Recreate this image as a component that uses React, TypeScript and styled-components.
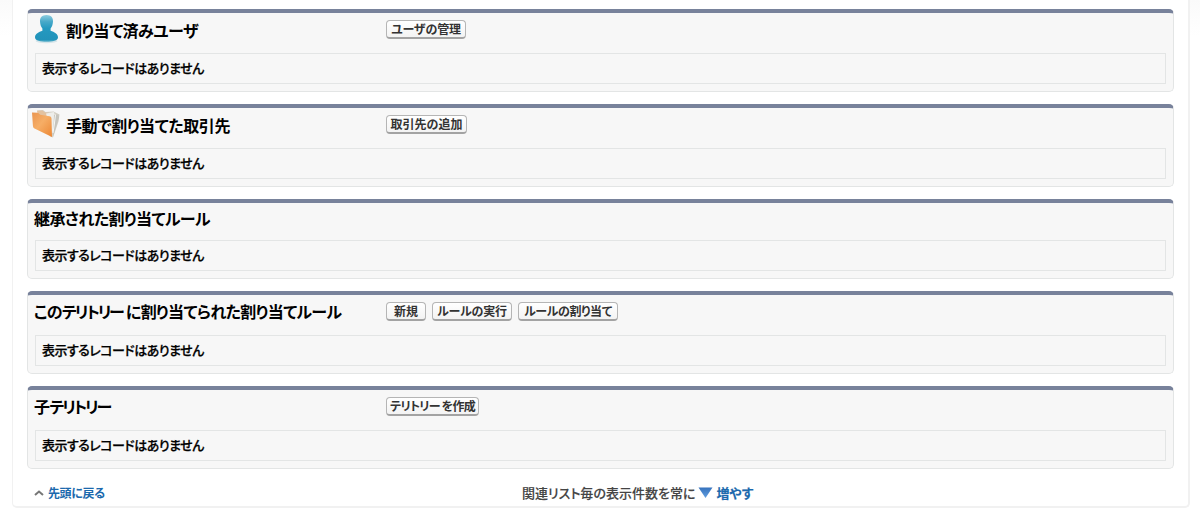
import { Fragment, type ReactNode } from "react";
import styled, { createGlobalStyle } from "styled-components";

const GlobalStyle = createGlobalStyle`
  * {
    box-sizing: border-box;
  }
  body {
    margin: 0;
    background-color: #fff;
    font-family: "Noto Sans CJK JP", sans-serif;
    font-feature-settings: "palt";
    color: #111;
  }
`;

const Page = styled.div`
  height: 514px;
  padding: 0 10px 6px 12px;
  background: linear-gradient(#fafafa, #fff 36px);
  overflow: hidden;
`;

const Content = styled.main`
  height: 508px;
  padding: 9px 15px 0 14px;
  background-color: #fff;
  border: 2px solid #f1f1f1;
  border-top: none;
  border-left-width: 1px;
  border-radius: 0 0 5px 5px;
`;

const RelatedLists = styled.div`
  display: flex;
  flex-direction: column;
  gap: 12px;
  width: 1147px;
`;

const Card = styled.section<{ $compact?: boolean }>`
  display: flex;
  flex-direction: column;
  height: ${({ $compact }) => ($compact ? "80px" : "83px")};
  padding: 0 7px 7px;
  background-color: #f7f7f7;
  border: 1px solid #e3e5e5;
  border-top: 4px solid #78829b;
  border-radius: 5px;
`;

const CardHeader = styled.div`
  display: flex;
  flex: 1;
  align-items: flex-start;
`;

const TitleCell = styled.div<{ $height: number }>`
  display: flex;
  align-items: center;
  width: 351px;
  height: ${({ $height }) => $height}px;
`;

const IconSlot = styled.span`
  display: flex;
  width: 32px;
  margin-left: -4px;
  margin-right: 4px;
`;

const Title = styled.h3<{ $spacing: number }>`
  margin: 0 0 0 -1px;
  color: #000;
  font-size: 16px;
  font-weight: 700;
  line-height: 20px;
  letter-spacing: ${({ $spacing }) => $spacing}px;
  white-space: nowrap;
`;

// katakana set tighter than the rest of the title
const Tight = styled.span`
  letter-spacing: -2.1px;
`;

const Actions = styled.div`
  display: flex;
  gap: 6px;
  padding-top: 7px;
`;

const ActionButton = styled.button<{ $width: number; $spacing?: number }>`
  width: ${({ $width }) => $width}px;
  height: 19px;
  padding: 0 0 1px;
  color: #333;
  background: linear-gradient(#fff, #f3f3f3);
  border: 1px solid #b5b5b5;
  border-bottom: 2px solid #a3a3a3;
  border-radius: 4px;
  font-family: inherit;
  font-feature-settings: inherit;
  font-size: 12px;
  font-weight: 700;
  line-height: 15px;
  letter-spacing: ${({ $spacing = 0 }) => $spacing}px;
  white-space: nowrap;
`;

const EmptyRow = styled.div`
  height: 31px;
  padding-left: 6px;
  color: #000;
  border: 1px solid #e3e5e5;
  font-size: 13px;
  font-weight: 500;
  -webkit-text-stroke: 0.25px #000;
  line-height: 28px;
  letter-spacing: -0.52px;
`;

const Footer = styled.footer`
  display: flex;
  align-items: center;
  height: 36px;
  padding: 11px 0 0 7px;
  font-size: 12px;
  font-weight: 700;
`;

const BackToTop = styled.a`
  display: flex;
  align-items: center;
  gap: 4px;
  width: 488px;
  color: #1b69ad;
  letter-spacing: -0.4px;
`;

const ListSize = styled.span`
  display: flex;
  align-items: center;
  gap: 3px;
  color: #444;
  font-size: 13px;
  font-weight: 500;
  -webkit-text-stroke: 0.15px;
`;

const MoreLink = styled.a`
  color: #1b69ad;
  font-weight: 700;
`;

const UserIcon = () => (
  <svg width="32" height="32" viewBox="0 0 32 32">
    <defs>
      <linearGradient id="user" x1="0" y1="0" x2="0" y2="1">
        <stop offset="0" stopColor="#8dccdf" />
        <stop offset=".25" stopColor="#48a9c9" />
        <stop offset=".5" stopColor="#2499c0" />
        <stop offset=".92" stopColor="#2293ba" />
        <stop offset="1" stopColor="#58afc9" />
      </linearGradient>
    </defs>
    <ellipse cx="15.5" cy="27" rx="11" ry="2.2" fill="#d5e4e9" />
    <path
      d="M15.5 1C11 1 8.700 3.800 9 7.600c.2 3 .9 5.300 2.400 7v2.200C7.800 18.200 4 19.500 4 23.500c0 3.200 5.500 4.200 11.500 4.200S27 26.700 27 23.500c0-4-3.800-5.300-7.400-6.700v-2.200c1.500-1.700 2.200-4 2.400-7C22.300 3.800 20 1 15.500 1Z"
      fill="url(#user)"
    />
  </svg>
);

const FolderIcon = () => (
  <svg width="32" height="32" viewBox="0 0 32 32">
    <defs>
      <linearGradient id="folder" x1="0" y1="0" x2="1" y2="1">
        <stop offset="0" stopColor="#ea9550" />
        <stop offset=".45" stopColor="#f6ae66" />
        <stop offset="1" stopColor="#ec8735" />
      </linearGradient>
    </defs>
    <path d="m6 1.500 6-.5 2.500 2 8-.5 6 3-1 7-5.500 16-3-1Z" fill="#d3cfc4" />
    <path d="m6 1.800 5.500-.3 2.500 2 4.500.5.500 7-12-5Z" fill="#e3c29f" />
    <path d="m15 4.500 8-1.500 1 4-2 15-2 4Z" fill="#eeeeea" />
    <path d="m23 6 4.500-.5.500 3-6 19Z" fill="#c5c4bd" />
    <path d="m24.500 5.500-1 8.500-1.500 10" fill="none" stroke="#f7f7f4" />
    <path d="m1 3.500 6 .2 2.300 2 9.200 1.500c1.300.3 1.900 1.100 2 2.500L21 28 3.500 19.500C2.500 19 2 18 1.900 16.500Z" fill="url(#folder)" />
  </svg>
);

const ChevronUp = () => (
  <svg width="10" height="8" viewBox="0 0 10 8">
    <path d="m1 6 4-3.500L9 6" fill="none" stroke="#777" strokeWidth="2" />
  </svg>
);

const TriangleDown = () => (
  <svg width="15" height="12" viewBox="0 0 15 12">
    <defs>
      <linearGradient id="triangle" x1="0" y1="0" x2="0" y2="1">
        <stop offset="0" stopColor="#3672bd" />
        <stop offset="1" stopColor="#639fe0" />
      </linearGradient>
    </defs>
    <path d="M.5.5h14L7.500 11Z" fill="url(#triangle)" />
  </svg>
);

interface Action {
  label: string;
  width: number;
  spacing?: number;
}

interface RelatedList {
  title: string;
  spacing: number;
  icon?: ReactNode;
  actions: Action[];
}

const lists: RelatedList[] = [
  {
    title: "割り当て済みユーザ",
    spacing: -0.5,
    icon: <UserIcon />,
    actions: [{ label: "ユーザの管理", width: 80, spacing: -0.2 }],
  },
  {
    title: "手動で割り当てた取引先",
    spacing: -0.4,
    icon: <FolderIcon />,
    actions: [{ label: "取引先の追加", width: 81 }],
  },
  { title: "継承された割り当てルール", spacing: -0.55, actions: [] },
  {
    title: "このテリトリー に割り当てられた割り当てルール",
    spacing: -0.6,
    actions: [
      { label: "新規", width: 40 },
      { label: "ルールの実行", width: 80, spacing: -0.2 },
      { label: "ルールの割り当て", width: 100, spacing: -0.4 },
    ],
  },
  {
    title: "子テリトリー",
    spacing: -0.6,
    actions: [{ label: "テリトリー を作成", width: 93, spacing: -0.75 }],
  },
];

const TIGHT_WORD = "テリトリー";

const renderTitle = (title: string) =>
  title.split(TIGHT_WORD).map((part, i) => (
    <Fragment key={i}>
      {i > 0 && <Tight>{TIGHT_WORD}</Tight>}
      {part}
    </Fragment>
  ));

const App = () => (
  <>
    <GlobalStyle />
    <Page>
      <Content>
        <RelatedLists>
          {lists.map(({ title, spacing, icon, actions }) => {
            const compact = actions.length === 0;
            return (
              <Card key={title} $compact={compact}>
                <CardHeader>
                  <TitleCell $height={compact ? 29 : icon ? 34 : 32}>
                    {icon && <IconSlot>{icon}</IconSlot>}
                    <Title $spacing={spacing}>{renderTitle(title)}</Title>
                  </TitleCell>
                  <Actions>
                    {actions.map((action) => (
                      <ActionButton
                        key={action.label}
                        $width={action.width}
                        $spacing={action.spacing}
                      >
                        {action.label}
                      </ActionButton>
                    ))}
                  </Actions>
                </CardHeader>
                <EmptyRow>表示するレコードはありません</EmptyRow>
              </Card>
            );
          })}
        </RelatedLists>
        <Footer>
          <BackToTop>
            <ChevronUp />
            先頭に戻る
          </BackToTop>
          <ListSize>
            関連リスト毎の表示件数を常に
            <TriangleDown />
            <MoreLink>増やす</MoreLink>
          </ListSize>
        </Footer>
      </Content>
    </Page>
  </>
);

export default App;
